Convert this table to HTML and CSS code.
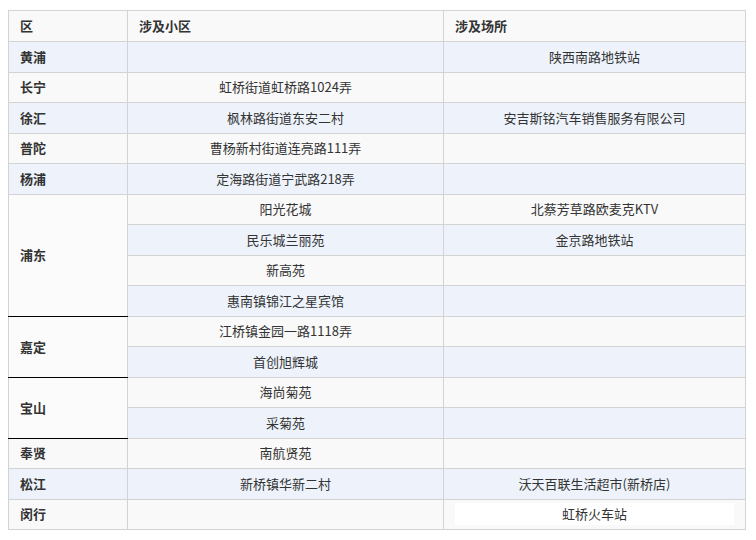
FILE: index.html
```html
<!DOCTYPE html>
<html lang="zh">
<head>
<meta charset="utf-8">
<title>涉及小区与场所</title>
<link rel="stylesheet" href="styles.css">
</head>
<body>
<table class="data">
  <colgroup>
    <col class="c1"><col class="c2"><col class="c3">
  </colgroup>
  <thead>
    <tr><th>区</th><th>涉及小区</th><th>涉及场所</th></tr>
  </thead>
  <tbody>
    <tr class="odd"><td class="dist">黄浦</td><td></td><td>陕西南路地铁站</td></tr>
    <tr class="even"><td class="dist">长宁</td><td>虹桥街道虹桥路1024弄</td><td></td></tr>
    <tr class="odd"><td class="dist">徐汇</td><td>枫林路街道东安二村</td><td>安吉斯铭汽车销售服务有限公司</td></tr>
    <tr class="even"><td class="dist">普陀</td><td>曹杨新村街道连亮路111弄</td><td></td></tr>
    <tr class="odd"><td class="dist">杨浦</td><td>定海路街道宁武路218弄</td><td></td></tr>
    <tr class="even"><td class="dist span sep" rowspan="4">浦东</td><td>阳光花城</td><td>北蔡芳草路欧麦克KTV</td></tr>
    <tr class="odd"><td>民乐城兰丽苑</td><td>金京路地铁站</td></tr>
    <tr class="even"><td>新高苑</td><td></td></tr>
    <tr class="odd"><td>惠南镇锦江之星宾馆</td><td></td></tr>
    <tr class="even"><td class="dist span sep" rowspan="2">嘉定</td><td>江桥镇金园一路1118弄</td><td></td></tr>
    <tr class="odd"><td>首创旭辉城</td><td></td></tr>
    <tr class="even"><td class="dist span sep" rowspan="2">宝山</td><td>海尚菊苑</td><td></td></tr>
    <tr class="odd"><td>采菊苑</td><td></td></tr>
    <tr class="even"><td class="dist">奉贤</td><td>南航贤苑</td><td></td></tr>
    <tr class="odd"><td class="dist">松江</td><td>新桥镇华新二村</td><td>沃天百联生活超市(新桥店)</td></tr>
    <tr class="even"><td class="dist">闵行</td><td></td><td class="boxed"><span class="hl">虹桥火车站</span></td></tr>
  </tbody>
</table>
</body>
</html>
```

FILE: styles.css
```css
html, body {
  margin: 0;
  padding: 0;
  background: #ffffff;
}
body {
  padding: 10px 0 0 8px;
  font-family: "Noto Sans CJK SC", "Liberation Sans", sans-serif;
  font-size: 13px;
  color: #333333;
}
.data {
  border-collapse: collapse;
  width: 737px;
  table-layout: fixed;
}
.c1 { width: 119px; }
.c2 { width: 316px; }
.c3 { width: 302px; }
.data th, .data td {
  border: 1px solid #d3d3d3;
  padding: 0 11px;
  line-height: 16px;
  vertical-align: middle;
}
.data th {
  height: 30px;
  text-align: left;
  font-weight: bold;
  background: #f9f9f9;
}
.data td {
  height: 29.5px;
  text-align: center;
}
.data td.dist {
  text-align: left;
  font-weight: bold;
}
.odd td { background: #eef3fb; }
.even td { background: #f9f9f9; }
.data td.span { background: #fbfbfb; }
.data td.sep { border-bottom: 1px solid #000000; }
.data td.boxed { padding: 0 11px; }
.hl {
  display: block;
  background: #ffffff;
  padding: 3px 0;
}
```
